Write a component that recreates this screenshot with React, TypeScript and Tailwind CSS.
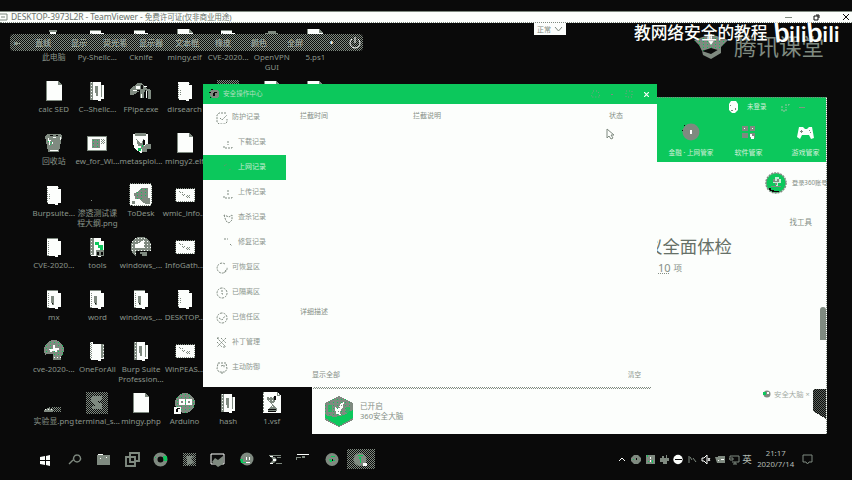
import React from "react";

type Kind =
  | "file" | "folder" | "folderFull" | "folderMark" | "tools" | "pc" | "card" | "image" | "bin" | "exe" | "msf"
  | "todesk" | "globe" | "star" | "open" | "dither" | "script" | "arduino" | "dot" | "hill" | "dome" | "pale";

const G = "#7f8a80";
const W = "#fcfefc";
const K = "#0a0a0a";
const N = "#0cc85c";

function Defs() {
  return (
    <svg className="absolute h-0 w-0" aria-hidden>
      <defs>
        <pattern id="dk" width="2" height="2" patternUnits="userSpaceOnUse">
          <rect width="1" height="1" fill={G} />
          <rect x="1" y="1" width="1" height="1" fill={G} />
        </pattern>
        <pattern id="gn" width="4" height="3" patternUnits="userSpaceOnUse">
          <rect width="4" height="3" fill={G} />
          <rect x="1" y="1" width="1" height="1" fill={N} />
        </pattern>
        <pattern id="wh" width="3" height="3" patternUnits="userSpaceOnUse">
          <rect width="3" height="3" fill={G} />
          <rect x="1" y="1" width="1" height="1" fill={W} />
        </pattern>
      </defs>
    </svg>
  );
}

function DeskIcon({ kind }: { kind: Kind }) {
  const folder = <path d="M6 4H17V7H20V21H17V23H14V22H8L6 21Z" fill={W} />;
  const edge = <path d="M6 4H17V5H6ZM7 7h1v1h-1ZM7 9h1v1h-1ZM7 11h1v1h-1ZM7 13h1v1h-1ZM7 15h1v1h-1ZM7 17h1v1h-1ZM7 19h1v1h-1ZM6 21h2v1h-2Z" fill={G} />;
  const art: Record<Kind, React.ReactNode> = {
    file: (<><path d="M5 3H17L21 7V23H5Z" fill={W} /><path d="M17 3h1v1h1v1h1v1h1v1h-4ZM5 3h1v20h-1ZM6 22h15v1h-15Z" fill={G} /></>),
    folder: (<>{folder}{edge}</>),
    pale: (<>{folder}<path d="M6 5h1v16h-1ZM8 9h1v1h-1ZM8 12h1v6h-1ZM17 5h1v2h-1Z" fill="url(#dk)" /></>),
    folderMark: (<>{folder}{edge}<path d="M10 10h3v9h-2v-2h-1Z" fill={G} /><path d="M11 17h1v1h-1Z" fill={K} /></>),
    folderFull: (<>{folder}<path d="M6 4h3v18h-3Z" fill="url(#wh)" /><path d="M11 8h3v10h-2v-3h-1ZM17 7h1v12h-1Z" fill={G} /></>),
    open: (<>{folder}<path d="M6 4h2v17h-2Z" fill="url(#dk)" /><path d="M9 4h9v2h-9Z" fill={K} /><path d="M17 6h3v14h-3Z" fill="url(#wh)" /></>),
    tools: (<>{folder}<path d="M6 4h4v17h-4Z" fill="url(#wh)" /><path d="M11 8h4v3h-4ZM14 11h5v5h-3v-2h-2ZM16 16h3v2h-3Z" fill={N} /><path d="M12 16h8v6h-8Z" fill={G} /><path d="M13 18h2v3h-2ZM17 18h2v3h-2Z" fill={K} /></>),
    pc: (<><path d="M8 4h8v2h-8Z" fill={G} /><path d="M9 6h6v2h-6Z" fill={W} /></>),
    card: (<><rect x="3.5" y="6.5" width="19" height="14" fill={W} stroke={G} /><rect x="8" y="9" width="8" height="9" fill="url(#gn)" /><path d="M17 9h4v5h-4Z" fill="url(#dk)" /></>),
    image: (<><rect x="3.5" y="6.5" width="19" height="13" fill={W} stroke={G} strokeDasharray="1 1" /><path d="M7 9h2v1h2v2h2v2h-3v-3h-3ZM14 13h4v3h-3ZM17 10h1v1h-1Z" fill="url(#dk)" /></>),
    bin: (<><path d="M4 6L7 4H19L21 6L18 22H7Z" fill={G} /><path d="M7 8h1v2h2v1h-1v4h-1v-3h-1ZM12 7h3v1h-3ZM9 20h8v1h-8ZM11 12h1v2h-1ZM19 7h1v3h-1Z" fill={W} /><path d="M7 11h1v1h-1ZM9 14h1v1h-1ZM10 12h1v1h-1Z" fill={N} /><path d="M9 5h3v1h-3ZM15 5h2v1h-2Z" fill={K} /></>),
    exe: (<><path d="M2 11L10 5H14L18 10L23 12V21H20V13L16 14V20H12V13L5 17H2Z" fill={G} /><path d="M8 8h4v3h-4ZM5 12h4v1h-4ZM16 8h3v1h-3ZM18 13h1v7h-1ZM13 16h1v4h-1Z" fill={W} /><path d="M13 7h2v4h-2ZM9 12h3v1h-3ZM17 12h1v8h-1Z" fill={K} /></>),
    msf: (<><path d="M5 4L13 3L20 4V14L17 20L13 23L7 19L5 14Z" fill={W} /><path d="M7 3h11v3h-11ZM8 8l5 6l3-6v11h-3v-3h-3ZM18 14h5v5h-4v3h-5v-4Z" fill={G} /><path d="M15 10h2v5h-2ZM10 18h1v1h-1Z" fill={K} /><path d="M10 18h3v3h-3ZM14 15h1v2h-1Z" fill={N} /></>),
    todesk: (<><rect x="1.5" y="1.5" width="22" height="22" rx="2" fill={W} stroke={G} strokeDasharray="1 1" /><path d="M6 11l4-1l3-4h7v9l2 3l-3 3h-4l-4-4h-4Z" fill="url(#gn)" /><path d="M4 19h3v3h-3ZM17 16h5v6h-5Z" fill={G} /></>),
    globe: (<><circle cx="13" cy="13" r="10.5" fill="url(#wh)" /><path d="M6 12L16 6V14H8Z" fill={W} /><path d="M8 17h17v7h-17Z" fill={K} /><path d="M12 18h7v4h-5v-2h-2Z" fill={G} /></>),
    star: (<><circle cx="13" cy="12" r="10" fill="url(#gn)" /><path d="M12 7h2v3h4v2h-2v2h-2v-1h-3v1h-2v-2h-1v-1h4Z" fill={W} /><path d="M5 16h7v2h9v5h-14Z" fill={K} /><path d="M12 18h8v4h-8Z" fill="url(#wh)" /></>),
    dither: (<><rect x="2" y="2" width="22" height="22" fill="url(#dk)" /><path d="M8 6H19L17 10L13 12L18 14V19H8L7 17L12 15L7 11Z" fill={G} /></>),
    script: (<><path d="M4 2H18L22 6V23H4Z" fill={W} /><path d="M4 2h1v21h-1ZM18 2h1v2h2v2h-3ZM8 7h9v3l-4 4l5 5v2h-9v-2l4-4l-5-5Z" fill="url(#wh)" /><path d="M15 6h2v4h-2ZM9 19h8v1h-8ZM9 21h8v1h-8Z" fill={K} /></>),
    arduino: (<><circle cx="13" cy="13" r="10" fill="url(#gn)" /><path d="M8 10h4v4h-4ZM15 10h4v4h-4Z" fill="none" stroke={W} strokeWidth="2" /><rect x="2" y="17" width="7" height="7" fill={W} /><path d="M4 22v-3h1v-1h3v1h-2v3Z" fill={K} /></>),
    dot: <rect x="7" y="18" width="1" height="1" fill={G} />,
    hill: (<><path d="M3 20L7 18L9 16V19H12V22H3Z" fill="url(#wh)" /><path d="M10 17h10v5h-10Z" fill="url(#dk)" /></>),
    dome: <path d="M4 11V9H6V7H9V5H17V7H19V9H21V11Z" fill={G} />,
  };
  return (
    <svg className="h-[26px] w-[26px] shrink-0" viewBox="0 0 26 26" shapeRendering="crispEdges">
      {art[kind]}
    </svg>
  );
}

const columns: [Kind, string][][] = [
  [["pc", "此电脑"], ["file", "calc SED"], ["bin", "回收站"], ["pale", "Burpsuite..."], ["folder", "CVE-2020..."], ["folderMark", "mx"], ["star", "cve-2020-..."], ["hill", "实验显.png"]],
  [["folder", "Py-Shellc..."], ["folderFull", "C--Shellc..."], ["card", "ew_for_Wi..."], ["dot", "渗透测试课\n程大纲.png"], ["tools", "tools"], ["folderMark", "word"], ["open", "OneForAll"], ["dither", "terminal_s..."]],
  [["folder", "Cknife"], ["exe", "FPipe.exe"], ["msf", "metasploi..."], ["todesk", "ToDesk"], ["globe", "windows_..."], ["folderMark", "windows_..."], ["folderFull", "Burp Suite\nProfession..."], ["file", "mingy.php"]],
  [["file", "mingy.elf"], ["pale", "dirsearch"], ["file", "mingy2.elf"], ["image", "wmic_info..."], ["image", "InfoGath..."], ["pale", "DESKTOP..."], ["image", "WinPEAS..."], ["arduino", "Arduino"]],
  [["folder", "CVE-2020..."], ["dither", ""], ["dot", ""], ["dot", ""], ["dot", ""], ["dot", ""], ["dot", ""], ["folderFull", "hash"]],
  [["dome", "OpenVPN\nGUI"], ["file", ""], ["dot", ""], ["dot", ""], ["dot", ""], ["dot", ""], ["dot", ""], ["script", "1.vsf"]],
  [["file", "5.ps1"], ["file", ""]],
];

function Desktop() {
  return (
    <div className="flex pl-[32px]">
      {columns.map((col, i) => (
        <div key={i} className="flex w-[43.6px] flex-col">
          {col.map(([kind, label], j) => (
            <div key={j} className="flex h-[52px] flex-col items-center">
              <DeskIcon kind={kind} />
              <span className="whitespace-pre text-center text-[7.9px] leading-[10px] text-[#8a958b]">{label}</span>
            </div>
          ))}
        </div>
      ))}
    </div>
  );
}

function SideIcon({ i }: { i: number }) {
  const paths = [
    "M10 1H3L1 3V10L3 12H9L11 10V7M4 6L6 8L11 3",
    "M1 9V11H9V9M5 4V8", "M1 4L4 2M6 8L8 7", "M1 9V11H9V9M5 3V8",
    "M1 3L3 9L6 11L9 8V3L6 5Z", "M1 2H5M7 7L9 9",
    "M9 2A5 5 0 1 0 11 5M10 8L8 11", "M6 1A5 5 0 1 0 6.1 1M6 3V7H8",
    "M6 1A5 5 0 1 0 6.1 1M3 6L6 8L9 4", "M1 1L10 10M10 1L1 10M5 1L10 6M1 5L6 10M1 1H4M7 10H10",
    "M2 1H10L11 7L9 10H3L1 7ZM5 4L8 3V6M6 10V12",
  ];
  return (
    <svg className="h-3 w-3 shrink-0" viewBox="0 0 12 12" fill="none" stroke={i === 2 ? "#5a9a68" : G} strokeWidth="1" strokeDasharray="2 1">
      <path d={paths[i]} />
    </svg>
  );
}

const side = ["防护记录", "下载记录", "上网记录", "上传记录", "查杀记录", "修复记录", "可恢复区", "已隔离区", "已信任区", "补丁管理", "主动防御"];

function RecordWindow() {
  return (
    <section className="absolute left-[203px] top-[84px] flex h-[303px] w-[454px] flex-col bg-[#fcfefc] text-[7px] text-[#858f86]">
      <header className="flex h-5 shrink-0 items-center bg-[#0cc85c] pl-[6px] pr-[8px]">
        <svg className="h-[10px] w-[10px]" viewBox="0 0 10 10" shapeRendering="crispEdges">
          <path d="M2 1H8L10 3V8L8 9H3L1 7V3Z" fill={G} />
          <path d="M0 3h2v1h-2ZM2 0h2v1h-2ZM5 3h3v1h-2v3h-2v-3ZM1 8h1v1h-1Z" fill={K} />
        </svg>
        <span className="ml-[4px] text-[6.6px] text-[#b4dfc0]">安全操作中心</span>
        <div className="ml-auto flex items-center gap-[11px] text-[#7f9a82]">
          <svg className="h-2 w-[9px]" viewBox="0 0 9 8" fill="none" stroke="currentColor" strokeDasharray="1 2"><path d="M2 1H7L9 7H0Z" /></svg>
          <span className="mr-[1px] h-px w-[2px] bg-[#7f8a80]" />
          <svg className="h-2 w-[8px]" viewBox="0 0 8 8" fill="none" stroke="currentColor" strokeDasharray="1 2"><rect x="1" y="1" width="6" height="6" /></svg>
          <svg className="h-[5px] w-[5px]" viewBox="0 0 5 5" stroke={W} strokeWidth="1.2"><path d="M0 0L5 5M5 0L0 5" /></svg>
        </div>
      </header>
      <div className="flex flex-1">
        <nav className="w-[83px] shrink-0 pt-px">
          {side.map((t, i) => {
            const sub = i > 0 && i < 6;
            const row = i === 2 ? "bg-[#0cc85c] text-[#c8edd3]" : "text-[#8b958c]";
            return (
              <div key={t} className={`flex h-[25px] items-center ${sub ? "pl-[20px]" : "pl-[13px]"} ${row}`}>
                <SideIcon i={i} />
                <span className={sub ? "ml-[3px]" : "ml-[4px]"}>{t}</span>
              </div>
            );
          })}
        </nav>
        <div className="flex flex-1 flex-col pl-[14px] pr-[9px]">
          <div className="flex h-[25px] items-center">
            <span className="w-[113px]">拦截时间</span>
            <span>拦截说明</span>
            <span className="ml-auto mr-[25px]">状态</span>
          </div>
          <span className="mt-[178px] leading-[10px]">详细描述</span>
          <div className="mt-[53px] flex justify-between pl-[12px] pr-[7px] leading-[10px]">
            <span>显示全部</span>
            <span className="text-[6.5px]">清空</span>
          </div>
        </div>
      </div>
    </section>
  );
}

function HealthWindow() {
  return (
    <section className="absolute left-[312px] top-[97px] flex h-[337px] w-[515px] flex-col border-r border-dotted border-[#7f8a80] bg-[#fcfefc] text-[7px] text-[#858f86]">
      <header className="flex h-[65px] shrink-0 flex-col border-t border-dotted border-[#7f8a80] bg-[#0cc85c] pl-[345px] text-[#d2efd9]">
        <div className="flex h-[18px] items-center pl-[72px]">
          <svg className="h-[12px] w-[9px]" viewBox="0 0 9 12"><path d="M2 0H7L9 3V9L6 12H3L0 9V3Z" fill={W} /><path d="M1 4h1v1h-1ZM2 9h2v1h-2ZM6 7h1v2h-1Z" fill={G} /></svg>
          <span className="ml-[9px] w-[22px] text-[6.5px]">未登录</span>
          <svg className="ml-[11px] h-[9px] w-[10px]" viewBox="0 0 10 9" fill="none" stroke="#9fc4a6" strokeDasharray="2 1"><path d="M2 3V8H6V4M5 2H9V0" /></svg>
          <span className="ml-[9px] h-px w-[6px] bg-[#7f9a82]" />
        </div>
        <div className="flex pt-[7px] text-center">
          <div className="flex w-[68px] flex-col items-center">
            <svg className="h-[18px] w-[18px]" viewBox="0 0 18 18"><circle cx="9" cy="9" r="8.5" fill={G} /><path d="M8 7h2v4h-2Z" fill={W} /><path d="M0 7h1v1h-1ZM2 2h1v1h-1Z" fill={K} /></svg>
            <span className="mt-[7px] text-[6.6px] leading-[10px]">金融 · 上网管家</span>
          </div>
          <div className="flex w-[47px] flex-col items-center">
            <svg className="h-[18px] w-[16px]" viewBox="0 0 16 18" shapeRendering="crispEdges"><path d="M1 3h6v5h-6ZM9 3h5v5h-5ZM1 10h6v5h-6ZM9 10h5v5h-5Z" fill={G} /><path d="M9 11h2v2h2v3h-3ZM3 5h1v1h-1ZM11 5h1v1h-1Z" fill={W} /></svg>
            <span className="mt-[7px] leading-[10px]">软件管家</span>
          </div>
          <div className="flex w-[54px] flex-col items-center pl-[13px]">
            <svg className="h-[18px] w-[17px]" viewBox="0 0 17 18"><path d="M2 4H6L8 6H10L12 4H15L17 15L14 16L12 12H5L3 16L0 14Z" fill={W} /><path d="M3 8h3v1h-3ZM4 7h1v3h-1ZM12 7h1v1h-1ZM13 9h1v1h-1Z" fill={G} /></svg>
            <span className="mt-[7px] whitespace-nowrap leading-[10px]">游戏管家</span>
          </div>
        </div>
      </header>
      <div className="flex h-[226px] flex-col pl-[345px]">
        <div className="flex items-center pl-[108px] pt-[10px]">
          <svg className="h-[22px] w-[22px] shrink-0" viewBox="0 0 22 22"><circle cx="11" cy="11" r="10" fill={N} stroke={G} strokeWidth="1.6" strokeDasharray="2 1" /><path d="M8 7h2v-2h4v2h2v4h-3v3h-2v-3h-3Z" fill={W} opacity=".75" /><path d="M8 7h2v2h2v-2h2v3h-6ZM6 14h10v1h-10ZM10 11h2v2h-2Z" fill={G} /><path d="M4 16h2v2h3v1h5v1h-7v-1h-2v-1h-1Z" fill={K} /></svg>
          <span className="ml-[5px] whitespace-nowrap text-[6.2px] leading-[10px]">登录360账号</span>
        </div>
        <div className="mt-[23px] flex justify-end pr-[14px] text-[7.5px] leading-[10px]">找工具</div>
        <div className="mt-[8px] flex h-[22px] overflow-hidden text-[17.4px] leading-[22px] text-[#667067]">
          <span className="-ml-[12px] whitespace-nowrap">议全面体检</span>
        </div>
        <div className="mt-[2px] flex items-center gap-[3px] pl-[1px] text-[8.5px] leading-[17px]"><span className="text-[11px] underline decoration-dotted">10</span>项</div>
        <div className="mt-[31px] flex justify-end"><span className="h-[33px] w-[6px] rounded-t-[3px] bg-[#7f8a80]" /></div>
      </div>
      <footer className="flex h-[46px] items-center pl-[12px]">
        <svg className="h-[32px] w-[30px]" viewBox="0 0 30 32" shapeRendering="crispEdges">
          <path d="M15 1L29 8V23L15 31L1 23V8Z" fill="url(#gn)" />
          <path d="M1 20L10 22L20 20L29 15V23L15 31L1 23Z" fill={N} />
          <path d="M1 23L15 31L29 23V25L15 32L1 25Z" fill={G} />
          <path d="M4 10h4v7h-4ZM22 12h4v6h-4Z" fill={N} opacity=".65" />
          <path d="M11 12L14 14L17 8L20 7L19 12L16 17L17 20L12 19Z" fill={W} />
          <path d="M15 12h1v1h-1ZM14 16h1v1h-1ZM17 10h1v1h-1Z" fill={G} />
        </svg>
        <div className="ml-[6px] text-[7.6px] leading-[10px]"><div>已开启</div><div>360安全大脑</div></div>
        <div className="mb-[36px] ml-auto flex items-center self-end text-[7px] text-[#a4aca5]">
          <svg className="h-[8px] w-[8px]" viewBox="0 0 8 8"><circle cx="4" cy="4" r="3.5" fill={G} /><path d="M0 2h3v3h-3Z" fill={N} /><path d="M4 2h2v2h-2Z" fill={W} /></svg>
          <span className="ml-[3px] w-[38px] whitespace-nowrap text-[7.4px] leading-[8px]">安全大脑 ×</span>
          <svg className="-my-4 h-[30px] w-[14px] translate-y-[10px]" viewBox="0 0 14 30" shapeRendering="crispEdges"><path d="M2 0H14V30L1 22V1Z" fill={K} /><path d="M2 0H14V30L1 22V1Z" fill="url(#dk)" opacity=".7" /></svg>
        </div>
      </footer>
    </section>
  );
}

function TaskIcon({ i }: { i: number }) {
  const art = [
    <path d="M1 5L6 4V8H1ZM7 4L11 3V8H7ZM1 9H6V13L1 12ZM7 9H11V14L7 13Z" fill={W} />,
    <path d="M2 12L6 8M10 3A3.5 3.5 0 1 0 10.1 3" stroke={G} fill="none" strokeWidth="1.4" />,
    <><path d="M1 3H14V13H1Z" fill={G} /><path d="M2 2h5v1h-5ZM10 5h1v1h-1ZM4 6h1v1h-1Z" fill={W} /></>,
    <path d="M5 1H14V9H10V14H1V5H5ZM5 5H10V10H5Z" stroke={G} fill="none" strokeWidth="1.9" />,
    <><circle cx="7.5" cy="7.5" r="5" stroke={G} fill="none" strokeWidth="4" /><path d="M10 4h4v5h-3Z" fill={N} /><path d="M2 5h1v1h-1Z" fill={N} /></>,
    <><path d="M1 1h13v13h-13Z" fill="url(#dk)" /><path d="M4 4H12L9 7L12 11L5 13V8Z" fill={G} /></>,
    <><path d="M1 2H14V12H1Z" fill="none" stroke={W} /><path d="M2 10L5 6L8 8L13 4V12L8 15Z" fill={G} /></>,
    <><circle cx="8" cy="7" r="6.5" fill={G} /><path d="M1 7h3v3h3v1h-5Z" fill={N} /><path d="M7 5h1v3h-1ZM10 5h1v3h-1ZM7 10h4v1h-4Z" fill={W} /></>,
    <><path d="M1 3h12v1h-12ZM3 5h4l2 3l-3 3h-4l3-3ZM9 5h4v1h-4ZM8 11h6v1h-6Z" fill={G} /><path d="M2 4h3v1h-3ZM5 7h3v2h-3ZM2 11h3v1h-3Z" fill={W} /></>,
    <><path d="M1 2h12v1h-12Z" fill={W} /><path d="M0 5h5v1h-4v2h-1ZM6 4h3v2h-3Z" fill={G} /></>,
    <><circle cx="7" cy="7.5" r="6.5" fill={G} /><path d="M6 4h4v1h-4ZM4 7h2v1h1v2h-2ZM8 8h2v1h-2Z" fill={N} /><path d="M7 7h1v2h-1Z" fill={K} /></>,
    <><circle cx="7" cy="7.5" r="6.5" fill={G} /><path d="M5 3h5v1h-5ZM6 5h2v6h-1v-4h-1Z" fill={N} /><path d="M10 11h4v3h-4Z" fill={W} /></>,
  ];
  return <svg className="h-[15px] w-[15px]" viewBox="0 0 15 15">{art[i]}</svg>;
}

function TrayIcon({ i }: { i: number }) {
  const art = [
    <path d="M2 7L5 4L8 7" stroke={W} fill="none" />,
    <><path d="M3 1h4l3 3v3l-3 3h-4l-3-3v-3Z" fill={G} /><path d="M5 4h1v2h-1Z" fill={K} /><path d="M2 5h1v1h-1Z" fill={N} /></>,
    <><path d="M1 1h9v9h-9Z" fill={G} /><path d="M2 1h1v2h-1ZM7 6h1v3h-1ZM3 7h1v1h-1Z" fill={N} /><path d="M5 3h1v2h-1ZM5 6h1v2h-1Z" fill={W} /></>,
    <path d="M1 4h2v-2h2v2h2v-3h1v3h2v3h-2v3h-4v-2h-3Z" fill={G} />,
    <><circle cx="5" cy="5.5" r="4.7" fill={W} /><path d="M2 5h7v1h-7Z" fill={K} /></>,
    <path d="M2 2V9M3 3L5 6M6 4L9 8" stroke={G} fill="none" />,
    <path d="M1 4H3L6 1V10L3 7H1ZM7 4L9 7M9 4L7 7" stroke={W} fill="none" />,
    <><path d="M0 3h3v-1h7v7h-8Z" fill={G} /><path d="M3 6h1v1h-1ZM6 5h3v1h-3Z" fill={W} /></>,
    <path d="M1 3V2H10V8H3M4 10H8M6 8V10M0 4H4V6H1Z" stroke={G} fill="none" />,
  ];
  return <svg className="h-[11px] w-[11px]" viewBox="0 0 11 11">{art[i]}</svg>;
}

function Taskbar() {
  return (
    <footer className="absolute left-0 top-[445px] flex h-[28px] w-full items-center pl-[32px]">
      {Array.from({ length: 12 }, (_, i) => (
        <div
          key={i}
          className={`flex h-[20px] w-[28.6px] items-center justify-center ${i === 11 ? "bg-[repeating-conic-gradient(#7f8a80_0_25%,#0a0a0a_0_50%)] bg-[length:2px_2px]" : ""}`}
        >
          <TaskIcon i={i} />
        </div>
      ))}
      <div className="ml-[242px] flex gap-[3px]">
        {Array.from({ length: 9 }, (_, i) => <TrayIcon key={i} i={i} />)}
        <span className="-ml-px text-[9.5px] leading-[11px] text-[#b2bab3]">英</span>
      </div>
      <div className="ml-[5px] w-[38px] whitespace-nowrap text-center text-[7.8px] leading-[11px] text-[#b4bcb5]">
        <div>21:17</div>
        <div>2020/7/14</div>
      </div>
      <svg className="ml-[7px] h-[11px] w-[11px]" viewBox="0 0 11 11" fill="none" stroke={G}><path d="M1 1H10V8H7L5.5 10L4 8H1Z" /></svg>
    </footer>
  );
}

export default function App() {
  return (
    <main className="relative h-[480px] w-[852px] overflow-hidden bg-[#0a0a0a] pt-[11px] font-['Noto_Sans','Noto_Sans_CJK_SC',sans-serif]">
      <Defs />
      <header className="flex h-[12px] items-center border-t border-b border-[#7f8a80] [border-bottom-style:dotted] bg-[#fcfefc] text-[9px] leading-[10px] text-[#68726a]">
        <svg className="h-[9px] w-[9px]" viewBox="0 0 9 9" fill="none" stroke={G}><path d="M0 1H7V7H0M1 4H5" /></svg>
        <span className="ml-[2px] flex whitespace-nowrap">
          <span className="text-[8.5px] tracking-[-0.1px]">DESKTOP-3973L2R - TeamViewer -&nbsp;</span>
          <span className="text-[7.6px] tracking-[-0.1px]">免费许可证(仅非商业用途)</span>
        </span>
        <div className="ml-auto flex items-center pr-[3px]">
          <span className="mr-[21px] h-px w-[7px] bg-[#7f8a80]" />
          <svg className="mr-[23px] h-[7px] w-[7px]" viewBox="0 0 7 7" fill="none" stroke={K}><path d="M1 2H5V6H1ZM3 1H6V4" /></svg>
          <svg className="h-[6px] w-[6px]" viewBox="0 0 6 6" stroke={K}><path d="M0 0L6 6M6 0L0 6" /></svg>
        </div>
      </header>
      <div className="pt-[3px]"><Desktop /></div>

      <div className="absolute left-[10px] top-[34px] flex h-[17px] w-[353px] items-center rounded-[4px] bg-[#0a0a0a] bg-[repeating-conic-gradient(#7f8a80_0_25%,#0a0a0a_0_50%)] bg-[length:2px_2px] text-[8px] font-bold leading-none text-[#8f9a90]">
        <span className="w-[15px] text-center">⇤</span>
        {["直线", "显示", "荧光笔", "显示器", "文本框", "橡皮", "颜色", "全屏"].map((t) => (
          <span key={t} className="w-[36px] text-center">{t}</span>
        ))}
        <span className="w-[37px] text-center text-[#fcfefc]">•</span>
        <svg className="-ml-px h-[12px] w-[12px]" viewBox="0 0 12 12" fill="none" stroke={W}><path d="M3 2A5 5 0 1 0 9 2M6 0V6" /></svg>
      </div>

      <div className="absolute left-[534px] top-[23px] flex h-[12px] w-[32px] items-center justify-between bg-[#fcfefc] px-[3px] text-[7px] leading-none text-[#7f8a80]">
        <span className="whitespace-nowrap">正常</span>
        <svg className="h-[8px] w-[9px]" viewBox="0 0 9 8" fill="none" stroke={G}><path d="M1 2L4.5 6L8 2" /></svg>
      </div>

      <div className="absolute left-[694px] top-[34px] flex items-center text-[#7f8a80]">
        <svg className="h-[26px] w-[34px]" viewBox="0 0 34 26"><path d="M0 6L17 0L34 6L27 13V17L17 14L8 17L5 11Z" fill="url(#gn)" /><path d="M14 0h4v5h3l-4 6l-4-6Z" fill={W} /><path d="M8 17L17 20L27 14V19L17 25L9 21Z" fill={G} /></svg>
        <span className="ml-[6px] whitespace-nowrap text-[22.5px] leading-[24px]">腾讯课堂</span>
      </div>
      <div className="absolute left-[634px] top-[20px] flex items-center whitespace-nowrap text-[#fcfefc]">
        <span className="text-[16.7px] font-medium leading-[24px] [text-shadow:0_0_1px_#0a0a0a]">教网络安全的教程</span>
        <span className="ml-[6px] flex items-baseline font-['Lato'] font-bold leading-[24px] tracking-[0.5px]">
          <span className="-rotate-6 text-[27px]">b</span><span className="text-[21px]">ili</span>
          <span className="-rotate-6 text-[27px]">b</span><span className="text-[21px]">ili</span>
        </span>
      </div>

      <HealthWindow />
      <RecordWindow />
      <div className="absolute left-[313px] top-[387px] h-[2px] w-[338px] bg-[repeating-conic-gradient(#7f8a80_0_25%,#fcfefc_0_50%)] bg-[length:2px_2px]" />
      <svg className="absolute left-[606px] top-[128px] h-[12px] w-[9px]" viewBox="0 0 9 12"><path d="M1 1V10L3 8L5 11L7 10L5 7H8Z" fill={W} stroke={G} /></svg>
      <Taskbar />
    </main>
  );
}
